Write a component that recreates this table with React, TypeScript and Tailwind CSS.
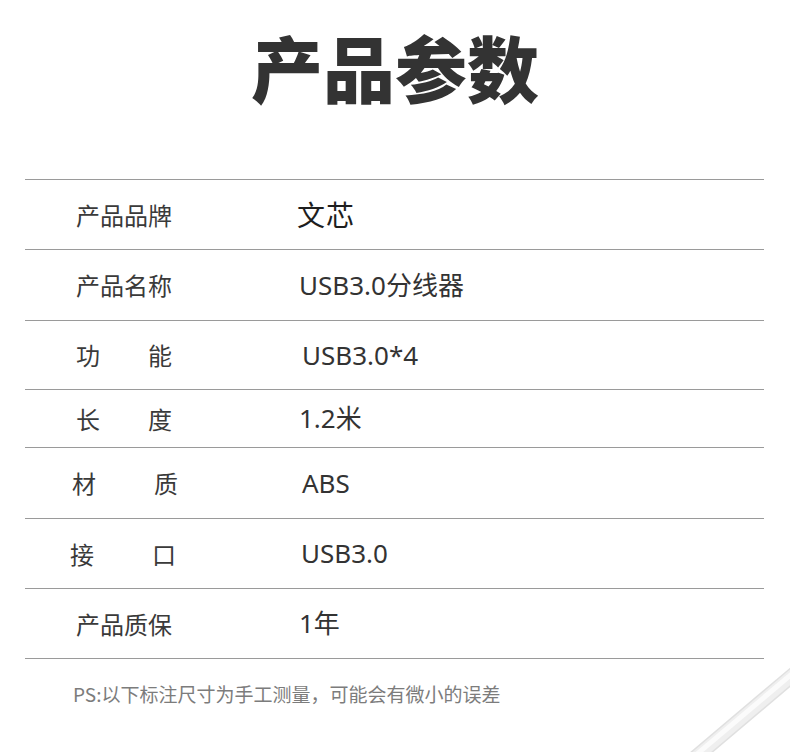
import React from "react";

type Row = {
  label: React.ReactNode;
  value: string;
  h: string;
  vx: string;
  big?: boolean;
};

const cjk = "font-['Noto_Sans_CJK_SC','Noto_Sans',sans-serif]";

function Spaced({ a, b, pl, w }: { a: string; b: string; pl: string; w: string }) {
  return (
    <div className={`flex justify-between ${pl} ${w}`}>
      <span>{a}</span>
      <span>{b}</span>
    </div>
  );
}

const rows: Row[] = [
  { label: <div className="pl-[51px]">产品品牌</div>, value: "文芯", h: "h-[70px]", vx: "pl-[272px]", big: true },
  { label: <div className="pl-[51px]">产品名称</div>, value: "USB3.0分线器", h: "h-[71px]", vx: "pl-[274px]" },
  { label: <Spaced a="功" b="能" pl="pl-[51px]" w="w-[147px]" />, value: "USB3.0*4", h: "h-[69px]", vx: "pl-[277px]" },
  { label: <Spaced a="长" b="度" pl="pl-[51px]" w="w-[147px]" />, value: "1.2米", h: "h-[58px]", vx: "pl-[274px]" },
  { label: <Spaced a="材" b="质" pl="pl-[47px]" w="w-[153px]" />, value: "ABS", h: "h-[71px]", vx: "pl-[277px]" },
  { label: <Spaced a="接" b="口" pl="pl-[45px]" w="w-[151px]" />, value: "USB3.0", h: "h-[70px]", vx: "pl-[276px]" },
  { label: <div className="pl-[51px]">产品质保</div>, value: "1年", h: "h-[70px]", vx: "pl-[274px]" },
];

export default function App() {
  return (
    <div className={`relative w-[790px] h-[752px] bg-white overflow-hidden ${cjk}`}>
      <div className="h-[179px] flex justify-center pt-[16px]">
        <h1 className="text-[72px] leading-[100px] font-black text-[#333333]">产品参数</h1>
      </div>
      <div className="mx-[25px] w-[739px] border-t border-[#9a9a9a]">
        {rows.map((r, i) => (
          <div
            key={i}
            className={`relative flex items-center border-b border-[#9a9a9a] ${r.h}`}
          >
            <div className="w-[180px] text-[24px] text-[#3a3a3a]">{r.label}</div>
            <div
              className={`absolute left-0 ${r.vx} ${
                r.big
                  ? "text-[28px] tracking-[1px] text-[#1e1e1e]"
                  : "text-[26px] text-[#333333]"
              } font-['Noto_Sans','Noto_Sans_CJK_SC',sans-serif]`}
            >
              {r.value}
            </div>
          </div>
        ))}
      </div>
      <div className="pl-[73px] pt-[21px] text-[19px] text-[#7c7c7c] leading-[28px]">
        PS:以下标注尺寸为手工测量，可能会有微小的误差
      </div>
      <svg
        className="absolute right-0 bottom-0"
        width="130"
        height="110"
        viewBox="0 0 130 110"
      >
        <line x1="30" y1="120" x2="140" y2="27" stroke="#e0e0e0" strokeWidth="15" />
        <line x1="30" y1="120" x2="140" y2="27" stroke="#efefef" strokeWidth="12" />
        <line x1="30" y1="118" x2="140" y2="25" stroke="#fbfbfb" strokeWidth="5" />
      </svg>
    </div>
  );
}
